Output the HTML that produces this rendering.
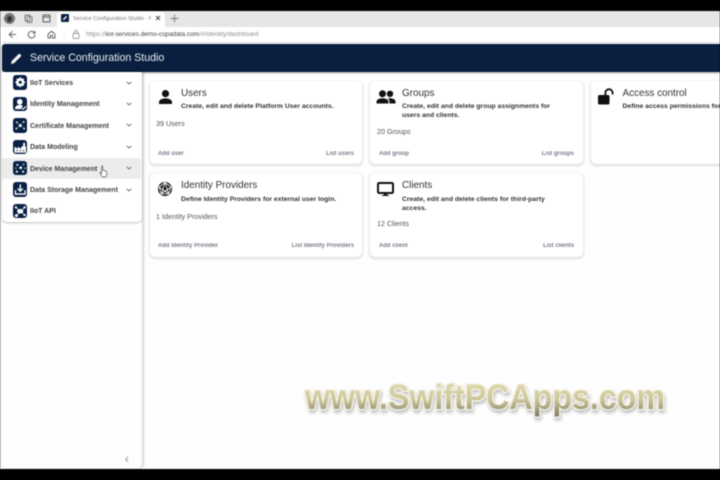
<!DOCTYPE html>
<html lang="en">
<head>
<meta charset="utf-8">
<title>Service Configuration Studio</title>
<style>
html,body{margin:0;padding:0;width:720px;height:480px;overflow:hidden;background:#000}
*{box-sizing:border-box}
#p{position:absolute;left:0;top:0;width:720px;height:480px;overflow:hidden;background:#fefefe;font-family:"Liberation Sans",sans-serif;filter:blur(.4px)}
.a{position:absolute;white-space:nowrap}
.card{position:absolute;background:#fff;border-radius:5px;box-shadow:0 1px 2px 1px rgba(0,0,0,.12)}
.t{position:absolute;font-size:9.9px;color:#333;white-space:nowrap;line-height:12px}
.d{position:absolute;font-size:6.8px;font-weight:bold;color:#333;line-height:8.6px;white-space:nowrap}
.n{position:absolute;font-size:7.2px;color:#555;white-space:nowrap;line-height:9px}
.l{position:absolute;font-size:5.95px;color:#667;white-space:nowrap;line-height:8px;font-weight:bold;opacity:.85}
.it{position:absolute;left:2px;width:139px;height:21.4px}
.ic{position:absolute;left:10.5px;top:3.4px;width:14.5px;height:14.5px;border-radius:3px;background:#0a2145}
.lb{position:absolute;left:28px;top:7px;font-size:7px;font-weight:bold;color:#444;white-space:nowrap;line-height:9px}
.ch{position:absolute;left:124px;top:7.6px}
</style>
</head>
<body>
<div id="p">
  <!-- browser chrome -->
  <div class="a" style="left:0;top:0;width:720px;height:11px;background:#000"></div>
  <div class="a" style="left:0;top:11px;width:720px;height:16px;background:#e6e6e6"></div>
  <div class="a" style="left:0;top:27px;width:720px;height:16px;background:#fff;border-bottom:1px solid #e2e2e2"></div>
  <div class="a" style="left:4px;top:13px;width:11px;height:11px;border-radius:50%;background:#777"></div>
  <div class="a" style="left:7px;top:16px;width:5px;height:6px;border-radius:50%;background:#333"></div>
  <svg class="a" style="left:24px;top:14px" width="9" height="9" viewBox="0 0 9 9" fill="none" stroke="#777" stroke-width="1"><rect x="1" y="1" width="5" height="6" rx="1"/><rect x="3" y="2.5" width="5" height="6" rx="1"/></svg>
  <svg class="a" style="left:42px;top:14px" width="9" height="9" viewBox="0 0 9 9" fill="none" stroke="#555" stroke-width="1"><rect x="1" y="1" width="7" height="7" rx="1"/><path d="M1 3h7"/></svg>
  <div class="a" style="left:57px;top:12px;width:108px;height:15px;background:#fff;border-radius:4px 4px 0 0"></div>
  <div class="a" style="left:61px;top:14px;width:8px;height:8px;background:#0a2145;border-radius:1px"></div>
  <svg class="a" style="left:62px;top:15px" width="6" height="6" viewBox="0 0 6 6"><path d="M1 5l.3-1.2L4 1l1 1-2.8 2.7z" fill="#fff"/></svg>
  <div class="a" style="left:73px;top:14.5px;font-size:5.6px;line-height:8px;color:#777;width:78px;overflow:hidden">Service Configuration Studio - Ro</div>
  <svg class="a" style="left:155px;top:15px" width="6" height="6" viewBox="0 0 6 6" stroke="#444" stroke-width=".9"><path d="M1 1l4 4M5 1L1 5"/></svg>
  <svg class="a" style="left:170px;top:14px" width="9" height="9" viewBox="0 0 9 9" stroke="#777" stroke-width=".9"><path d="M4.5 .5v8M.5 4.5h8"/></svg>
  <svg class="a" style="left:8px;top:30px" width="9" height="9" viewBox="0 0 9 9" fill="none" stroke="#666" stroke-width="1"><path d="M8 4.5H1.2M4.5 1.2L1.2 4.5l3.3 3.3"/></svg>
  <svg class="a" style="left:27px;top:30px" width="9" height="9" viewBox="0 0 9 9" fill="none" stroke="#666" stroke-width="1"><path d="M7.6 3A3.4 3.4 0 1 0 8 4.8M8 1v2.2H5.8"/></svg>
  <svg class="a" style="left:47px;top:30px" width="9" height="9" viewBox="0 0 9 9" fill="none" stroke="#666" stroke-width="1"><path d="M1 4.2l3.5-3 3.5 3V8H5.5V5.5h-2V8H1z"/></svg>
  <div class="a" style="left:65px;top:28.5px;width:655px;height:13px;background:#fff;border-radius:7px 0 0 7px;box-shadow:-1px 0 1px rgba(0,0,0,.05)"></div>
  <svg class="a" style="left:72px;top:30px" width="8" height="9" viewBox="0 0 8 9" fill="none" stroke="#999" stroke-width=".9"><rect x="1" y="3.5" width="6" height="5" rx=".7"/><path d="M2.5 3.5V2a1.5 1.5 0 0 1 3 0v1.5"/></svg>
  <div class="a" style="left:86px;top:31px;font-size:6.4px;line-height:8px;color:#8f8f8f">https://<span style="color:#444">iiot-services.demo-copadata.com</span>/#/identity/dashboard</div>

  <!-- header -->
  <div class="a" style="left:2px;top:44px;width:718px;height:28px;background:#0a1f3f;border-radius:3px 0 0 3px;box-shadow:0 1px 2px rgba(0,0,0,.35)"></div>
  <svg class="a" style="left:10px;top:52px" width="13" height="13" viewBox="0 0 13 13"><path d="M1 12l.7-3L8.6 2.1a1 1 0 0 1 1.4 0l.9.9a1 1 0 0 1 0 1.4L4 11.3z" fill="#f4f4f4"/></svg>
  <div class="a" style="left:30px;top:50.5px;font-size:10.6px;line-height:14px;color:#e9edf2">Service Configuration Studio</div>

  <!-- sidebar -->
  <div class="a" style="left:2px;top:72px;width:139.5px;height:396px;background:#fefefe;border-radius:0 0 4px 4px;box-shadow:1px 0 2px 1px rgba(0,0,0,.16)"></div>
  <div class="a" style="left:2px;top:72px;width:139.5px;height:150px;background:#fff;border-radius:0 0 5px 5px;box-shadow:0 1px 2px rgba(0,0,0,.25)"></div>

  <div class="it" style="top:72px"><div class="ic"></div>
    <svg class="ic" style="background:none" viewBox="0 0 15 15"><circle cx="7.5" cy="7.5" r="2.9" fill="none" stroke="#fff" stroke-width="2.6"/><path d="M7.5 2.5v2M7.5 10.5v2M2.5 7.5h2M10.5 7.5h2M4 4l1.4 1.4M9.6 9.6L11 11M4 11l1.4-1.4M9.6 5.4L11 4" stroke="#fff" stroke-width="1.7"/></svg>
    <div class="lb">IIoT Services</div><svg class="ch" width="6" height="6" viewBox="0 0 6 6" fill="none" stroke="#777" stroke-width="1"><path d="M.7 1.8L3 4l2.3-2.2"/></svg></div>
  <div class="it" style="top:93.4px"><div class="ic"></div>
    <svg class="ic" style="background:none" viewBox="0 0 15 15"><circle cx="7" cy="5" r="2.9" fill="#fff"/><path d="M2 12.5c0-3 2.3-4.4 5-4.4 1.2 0 2.4.3 3.2.9L8 12.5z" fill="#fff"/><path d="M9 11.6l1.5 1 3-3" fill="none" stroke="#fff" stroke-width="1.2"/></svg>
    <div class="lb">Identity Management</div><svg class="ch" width="6" height="6" viewBox="0 0 6 6" fill="none" stroke="#777" stroke-width="1"><path d="M.7 1.8L3 4l2.3-2.2"/></svg></div>
  <div class="it" style="top:114.8px"><div class="ic"></div>
    <svg class="ic" style="background:none" viewBox="0 0 15 15" fill="#fff"><circle cx="7.5" cy="7.8" r="1.5"/><circle cx="4" cy="4.5" r=".9"/><circle cx="11" cy="4" r=".9"/><circle cx="3.5" cy="11" r=".9"/><circle cx="11.5" cy="11" r=".9"/><path d="M4 4.5l7.5 6.5M11 4l-7.5 7" stroke="#fff" stroke-width=".35"/></svg>
    <div class="lb">Certificate Management</div><svg class="ch" width="6" height="6" viewBox="0 0 6 6" fill="none" stroke="#777" stroke-width="1"><path d="M.7 1.8L3 4l2.3-2.2"/></svg></div>
  <div class="it" style="top:136.2px"><div class="ic"></div>
    <svg class="ic" style="background:none" viewBox="0 0 15 15"><path d="M1.5 13V7l3.5 2V7l3.5 2V7l2-.5V3h2v3.5l1 .5v6z" fill="#fff"/><path d="M3.5 11h1.5M6.8 11h1.5M10 11h1.5" stroke="#0a2145" stroke-width="1.1"/></svg>
    <div class="lb">Data Modeling</div><svg class="ch" width="6" height="6" viewBox="0 0 6 6" fill="none" stroke="#777" stroke-width="1"><path d="M.7 1.8L3 4l2.3-2.2"/></svg></div>
  <div class="it" style="top:157.6px;background:#ececec"><div class="ic"></div>
    <svg class="ic" style="background:none" viewBox="0 0 15 15" fill="#fff"><circle cx="8" cy="7" r="1.4"/><circle cx="4.5" cy="4" r="1"/><circle cx="11" cy="3.5" r=".8"/><circle cx="4" cy="11" r="1.1"/><circle cx="10.5" cy="11" r="1.1"/><circle cx="3" cy="7.5" r=".6"/><circle cx="12.5" cy="7.5" r=".7"/></svg>
    <div class="lb">Device Management</div><svg class="ch" width="6" height="6" viewBox="0 0 6 6" fill="none" stroke="#777" stroke-width="1"><path d="M.7 1.8L3 4l2.3-2.2"/></svg></div>
  <div class="it" style="top:179px"><div class="ic"></div>
    <svg class="ic" style="background:none" viewBox="0 0 15 15" fill="none" stroke="#fff" stroke-width="1.4"><path d="M2.5 8.5v4h10v-4"/><path d="M7.5 2.5v7M4.8 6.8l2.7 2.7 2.7-2.7"/></svg>
    <div class="lb">Data Storage Management</div><svg class="ch" width="6" height="6" viewBox="0 0 6 6" fill="none" stroke="#777" stroke-width="1"><path d="M.7 1.8L3 4l2.3-2.2"/></svg></div>
  <div class="it" style="top:200.4px"><div class="ic"></div>
    <svg class="ic" style="background:none" viewBox="0 0 15 15" fill="#fff"><ellipse cx="7.5" cy="7.5" rx="3.2" ry="2.3"/><circle cx="3" cy="3.5" r="1.2"/><circle cx="12" cy="3.5" r="1.2"/><circle cx="3.5" cy="12" r="1.5"/><circle cx="12" cy="11.5" r="1.2"/><path d="M3 3.5l9 8M12 3.5l-8.5 8.5" stroke="#fff" stroke-width=".8"/></svg>
    <div class="lb">IIoT API</div></div>

  <!-- cursor -->
  <svg class="a" style="left:99px;top:165px" width="9" height="13" viewBox="0 0 9 13"><path d="M2.6 1.2c.6-.5 1.2 0 1.2.6v3.4l3 .8c.6.2 1 .6 1 1.3L7.4 11c-.1.6-.4 1-1 1H4c-.5 0-.8-.2-1-.6L1 8.2c-.3-.6.4-1.2 1-.7l.6.6z" fill="#fff" stroke="#555" stroke-width=".7"/></svg>

  <!-- collapse chevron -->
  <svg class="a" style="left:124px;top:456px" width="6" height="7" viewBox="0 0 6 7" fill="none" stroke="#999" stroke-width="1"><path d="M4 1L1.8 3.5 4 6"/></svg>

  <!-- Users -->
  <div class="card" style="left:150px;top:81px;width:212px;height:83px"></div>
  <svg class="a" style="left:157px;top:88px" width="17" height="18" viewBox="0 0 17 18"><circle cx="8.5" cy="5.6" r="3.6" fill="#111"/><path d="M2 16v-2c0-2.6 3.8-3.6 6.5-3.6S15 11.4 15 14v2z" fill="#111"/></svg>
  <div class="t" style="left:181px;top:88px">Users</div>
  <div class="d" style="left:181px;top:103px">Create, edit and delete Platform User accounts.</div>
  <div class="n" style="left:156px;top:119px">39 Users</div>
  <div class="l" style="left:158px;top:149.5px">Add user</div>
  <div class="l" style="right:366px;top:149.5px">List users</div>

  <!-- Groups -->
  <div class="card" style="left:370px;top:81px;width:213px;height:83px"></div>
  <svg class="a" style="left:376px;top:88px" width="20" height="18" viewBox="0 0 20 18" fill="#111"><circle cx="6.5" cy="5.8" r="3.5"/><circle cx="14" cy="5.8" r="3.2"/><path d="M.5 15.5v-1.8c0-2.4 3.5-3.4 6-3.4s6 1 6 3.4v1.8z"/><path d="M13.5 15.5v-2c0-1.3-.7-2.4-1.8-3.1.8-.1 1.6-.2 2.3-.2 2.4 0 5.5 1 5.5 3.3v2z"/></svg>
  <div class="t" style="left:402px;top:88px">Groups</div>
  <div class="d" style="left:402px;top:103px">Create, edit and delete group assignments for<br>users and clients.</div>
  <div class="n" style="left:377px;top:127px">20 Groups</div>
  <div class="l" style="left:379px;top:149.5px">Add group</div>
  <div class="l" style="right:146px;top:149.5px">List groups</div>

  <!-- Access control -->
  <div class="card" style="left:591px;top:81px;width:140px;height:83px"></div>
  <svg class="a" style="left:597px;top:88px" width="20" height="18" viewBox="0 0 20 18" fill="#111"><rect x="1" y="7" width="11.5" height="9.5" rx="1.5"/><path d="M8.4 7V4.8a3.6 3.6 0 0 1 7.2 0V6.5" fill="none" stroke="#111" stroke-width="1.8"/></svg>
  <div class="t" style="left:622.5px;top:88px">Access control</div>
  <div class="d" style="left:622.5px;top:103px">Define access permissions for</div>

  <!-- Identity Providers -->
  <div class="card" style="left:150px;top:173px;width:212px;height:84px"></div>
  <svg class="a" style="left:157px;top:181px" width="16" height="16" viewBox="0 0 16 16"><circle cx="8" cy="8" r="7" fill="#111"/><path d="M8 1.5L14 6 11.8 13H4.2L2 6zM8 1.5L4.2 13M8 1.5L11.8 13M2 6l9.8 7M14 6L4.2 13" fill="none" stroke="#fff" stroke-width=".85"/></svg>
  <div class="t" style="left:181px;top:180px">Identity Providers</div>
  <div class="d" style="left:181px;top:196px">Define Identity Providers for external user login.</div>
  <div class="n" style="left:156px;top:211.5px">1 Identity Providers</div>
  <div class="l" style="left:158px;top:241.5px">Add Identity Provider</div>
  <div class="l" style="right:366px;top:241.5px">List Identity Providers</div>

  <!-- Clients -->
  <div class="card" style="left:370px;top:173px;width:213px;height:84px"></div>
  <svg class="a" style="left:377px;top:182px" width="17" height="15" viewBox="0 0 17 15"><rect x="1" y="1" width="15" height="10" rx="1.2" fill="#fff" stroke="#111" stroke-width="2"/><path d="M7 11h3v2h2v1H5v-1h2z" fill="#111"/></svg>
  <div class="t" style="left:402px;top:180px">Clients</div>
  <div class="d" style="left:402px;top:196px">Create, edit and delete clients for third-party<br>access.</div>
  <div class="n" style="left:377px;top:219px">12 Clients</div>
  <div class="l" style="left:379px;top:241.5px">Add client</div>
  <div class="l" style="right:146px;top:241.5px">List clients</div>

  <!-- watermark -->
  <svg class="a" style="left:295px;top:370px" width="380" height="60" viewBox="0 0 380 60">
    <defs>
      <linearGradient id="g" x1="0" y1="0" x2="0" y2="1">
        <stop offset="0" stop-color="#e4dfb2"/>
        <stop offset=".55" stop-color="#cdc79c"/>
        <stop offset="1" stop-color="#7f7a62"/>
      </linearGradient>
      <filter id="s" x="-5%" y="-20%" width="110%" height="150%"><feGaussianBlur in="SourceGraphic" stdDeviation=".25" result="b"/><feDropShadow in="b" dx="1" dy="2.5" stdDeviation="1.5" flood-color="#000" flood-opacity=".26"/></filter>
    </defs>
    <text x="10" y="39" font-family="Liberation Sans, sans-serif" font-size="35" font-weight="bold" textLength="360" lengthAdjust="spacingAndGlyphs" fill="url(#g)" stroke="#f8f3e6" stroke-width="2.4" paint-order="stroke" filter="url(#s)">www.SwiftPCApps.com</text>
  </svg>

  <!-- bottom bar -->
  <div class="a" style="left:0;top:469px;width:720px;height:11px;background:#000"></div>
</div>
</body>
</html>
